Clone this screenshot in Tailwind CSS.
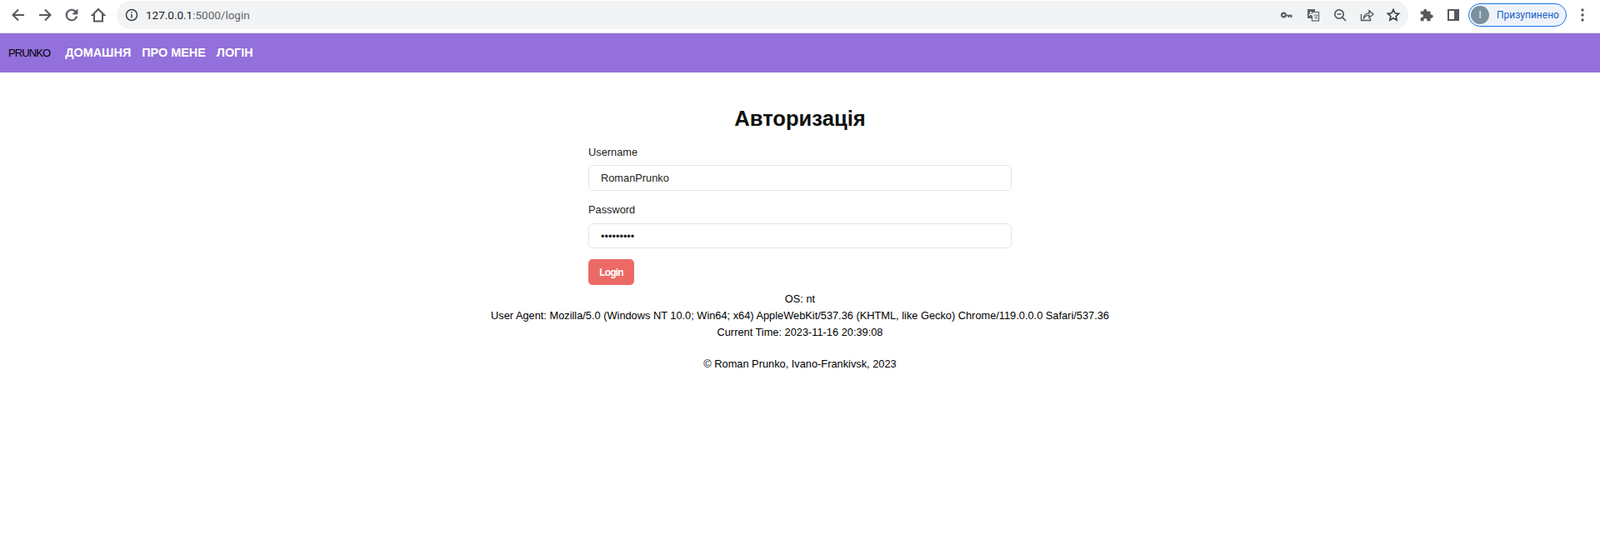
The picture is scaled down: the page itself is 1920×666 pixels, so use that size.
<!DOCTYPE html>
<html lang="en">
<head>
    <meta charset="UTF-8">
    <title>Login</title>
    <script src="https://cdn.jsdelivr.net/npm/@tailwindcss/browser@4"></script>
</head>
<body class="bg-white text-black font-['Liberation_Sans',Arial,sans-serif] text-[12.8px] overflow-hidden">

    <!-- Browser toolbar -->
    <div class="h-[40px] flex items-center pl-[10px] pb-[3px] border-b border-[#e4e0ee]">
        <button class="w-6 h-6 flex items-center justify-center mr-2">
            <svg class="w-6 h-6" viewBox="0 0 24 24" fill="none" stroke="#55595e" stroke-width="2"><path d="M19 12H6M12 5.500L5.500 12l6.500 6.500"/></svg>
        </button>
        <button class="w-6 h-6 flex items-center justify-center mr-2">
            <svg class="w-6 h-6" viewBox="0 0 24 24" fill="none" stroke="#55595e" stroke-width="2"><path d="M5 12h13M12 5.500l6.500 6.500-6.500 6.500"/></svg>
        </button>
        <button class="w-6 h-6 flex items-center justify-center mr-2">
            <svg class="w-6 h-6" viewBox="-1.500 -1.500 27 27" fill="#55595e" stroke="#55595e" stroke-width=".6"><path d="M17.650 6.350A7.960 7.960 0 0 0 12 4a8 8 0 1 0 7.730 10h-2.080A6 6 0 1 1 12 6c1.660 0 3.140.690 4.220 1.780L13 11h7V4z"/></svg>
        </button>
        <button class="w-6 h-6 flex items-center justify-center">
            <svg class="w-6 h-6" viewBox="0 0 24 24" fill="none" stroke="#55595e" stroke-width="2"><path d="M12 5L5 12h2v7.500h10V12h2z"/></svg>
        </button>

        <!-- Address bar -->
        <div class="ml-[10px] w-[1550px] h-[34px] rounded-full bg-[#f1f3f4] flex items-center pl-[10px] pr-[8px]">
            <svg class="w-4 h-4" viewBox="0 0 16 16" fill="none" stroke="#3c4043" stroke-width="1.500"><circle cx="8" cy="8" r="6.500"/><path d="M8 7v4.500M8 4.200v1.600"/></svg>
            <span class="ml-[9px] text-[13.5px] text-[#5f6368] font-['Roboto',sans-serif]"><span class="text-[#202124]">127.0.0.1</span>:5000/login</span>
            <div class="ml-auto flex items-center gap-[12px]">
                <svg class="w-5 h-5" viewBox="0 0 20 20" fill="#55595e"><path d="M6.500 6.500a3.500 3.500 0 1 0 3.300 4.700h1.700v1.800h2v-1.800h1v1.800h2v-3.300H9.800a3.500 3.500 0 0 0-3.300-3.200zm0 2.200a1.300 1.300 0 1 1 0 2.600 1.300 1.300 0 0 1 0-2.600z"/></svg>
                <svg class="w-5 h-5" viewBox="0 0 20 20"><rect x="3" y="3" width="9" height="11" fill="#5f6368"/><rect x="8.500" y="6.500" width="8" height="10.500" fill="#f1f3f4" stroke="#5f6368" stroke-width="1.200"/><path d="M5 11l2-5 2 5M5.800 9.500h2.500" fill="none" stroke="#fff" stroke-width="1"/><path d="M10.500 10h4.500M15 10c-.5 2-2 3.500-3.500 4M11.500 11.500c.6 1.200 2 2.200 3.500 2.700" fill="none" stroke="#5f6368" stroke-width=".9"/></svg>
                <svg class="w-5 h-5" viewBox="0 0 20 20" fill="none" stroke="#55595e" stroke-width="1.700"><circle cx="9" cy="9" r="5.200"/><path d="M12.800 12.800L17 17M6.500 9h5"/></svg>
                <svg class="w-5 h-5" viewBox="0 0 20 20" fill="none" stroke="#55595e" stroke-width="1.400"><path d="M3.500 9v7.500h11V14"/><path d="M6.500 14c0-3.800 2.800-6 6.500-6V4.800l5 4.200-5 4.200v-2.800c-2.800 0-5 .9-6.500 3.600z"/></svg>
                <svg class="w-5 h-5" viewBox="0 0 20 20" fill="none" stroke="#3c4043" stroke-width="1.700"><path d="M10 3.500l2 4.300 4.600.5-3.400 3.200.9 4.600-4.100-2.300-4.100 2.300.9-4.600-3.400-3.200 4.600-.5z"/></svg>
            </div>
        </div>

        <!-- Extensions and profile -->
        <svg class="w-5 h-5 ml-[12px]" viewBox="-1 -1 22 22" fill="#55595e"><path d="M8 2a2 2 0 0 1 2 2v1h5v4.500h1.200a2.300 2.300 0 0 1 0 4.600H15V18h-4.500v-1.300a2.200 2.200 0 0 0-4.400 0V18H2v-4.500h1.200a2.300 2.300 0 0 0 0-4.600H2V5h4V4a2 2 0 0 1 2-2z"/></svg>
        <svg class="w-5 h-5 ml-[12px]" viewBox="0 0 20 20"><path d="M4 4h12v12H4z" fill="none" stroke="#55595e" stroke-width="2"/><rect x="11" y="3" width="6" height="14" fill="#55595e"/></svg>
        <div class="ml-[8px] w-[118px] h-[28px] rounded-full border border-[#1a73e8] bg-[#eef3fb] flex items-center pl-[2px]">
            <div class="w-[22px] h-[22px] rounded-full bg-[#7a909c] text-[#e8eef2] text-[13px] flex items-center justify-center">I</div>
            <span class="ml-[9px] text-[12px] text-[#1a5fc4] font-['Roboto',sans-serif]">Призупинено</span>
        </div>
        <svg class="w-[4px] h-[16px] ml-[17px]" viewBox="0 0 4 16" fill="#55595e"><circle cx="2" cy="2" r="1.700"/><circle cx="2" cy="8" r="1.700"/><circle cx="2" cy="14" r="1.700"/></svg>
    </div>

    <!-- Navigation Bar -->
    <nav class="h-[47px] bg-[#9370db] flex items-center pl-[10px] pt-[1px]">
        <a class="text-[13px] tracking-[-0.9px] text-black mr-[18px]">PRUNKO</a>
        <a class="text-[14.4px] font-bold text-white mr-[13px]">ДОМАШНЯ</a>
        <a class="text-[14.4px] font-bold text-white mr-[13px]">ПРО МЕНЕ</a>
        <a class="text-[14.4px] font-bold text-white">ЛОГІН</a>
    </nav>

    <!-- Login form -->
    <main class="w-[508px] mx-auto pt-[37px]">
        <h1 class="text-[25.6px] leading-[36px] font-bold text-[#111] text-center">Авторизація</h1>
        <form class="mt-[13px]">
            <label class="block leading-[20px] text-[#222]">Username</label>
            <input type="text" value="RomanPrunko" class="mt-[5px] block w-full h-[31px] px-[14px] border border-[#e3e3ea] rounded-[5px] text-[12.8px] text-[#222]">
            <label class="block mt-[13px] leading-[20px] text-[#222]">Password</label>
            <input type="password" value="123456789" class="mt-[6px] block w-full h-[30px] px-[14px] border border-[#e3e3ea] rounded-[5px] text-[12.8px] text-[#222]">
            <button type="button" class="mt-[13px] block w-[55px] h-[31px] pt-[1px] bg-[#ec6a66] rounded-[5px] text-white text-[12px] tracking-[-0.8px] font-bold">Login</button>
        </form>
    </main>

    <!-- System info -->
    <div class="text-center leading-[20px] mt-[7px]">
        <p>OS: nt</p>
        <p>User Agent: Mozilla/5.0 (Windows NT 10.0; Win64; x64) AppleWebKit/537.36 (KHTML, like Gecko) Chrome/119.0.0.0 Safari/537.36</p>
        <p>Current Time: 2023-11-16 20:39:08</p>
        <p class="mt-[18px]">© Roman Prunko, Ivano-Frankivsk, 2023</p>
    </div>
</body>
</html>
